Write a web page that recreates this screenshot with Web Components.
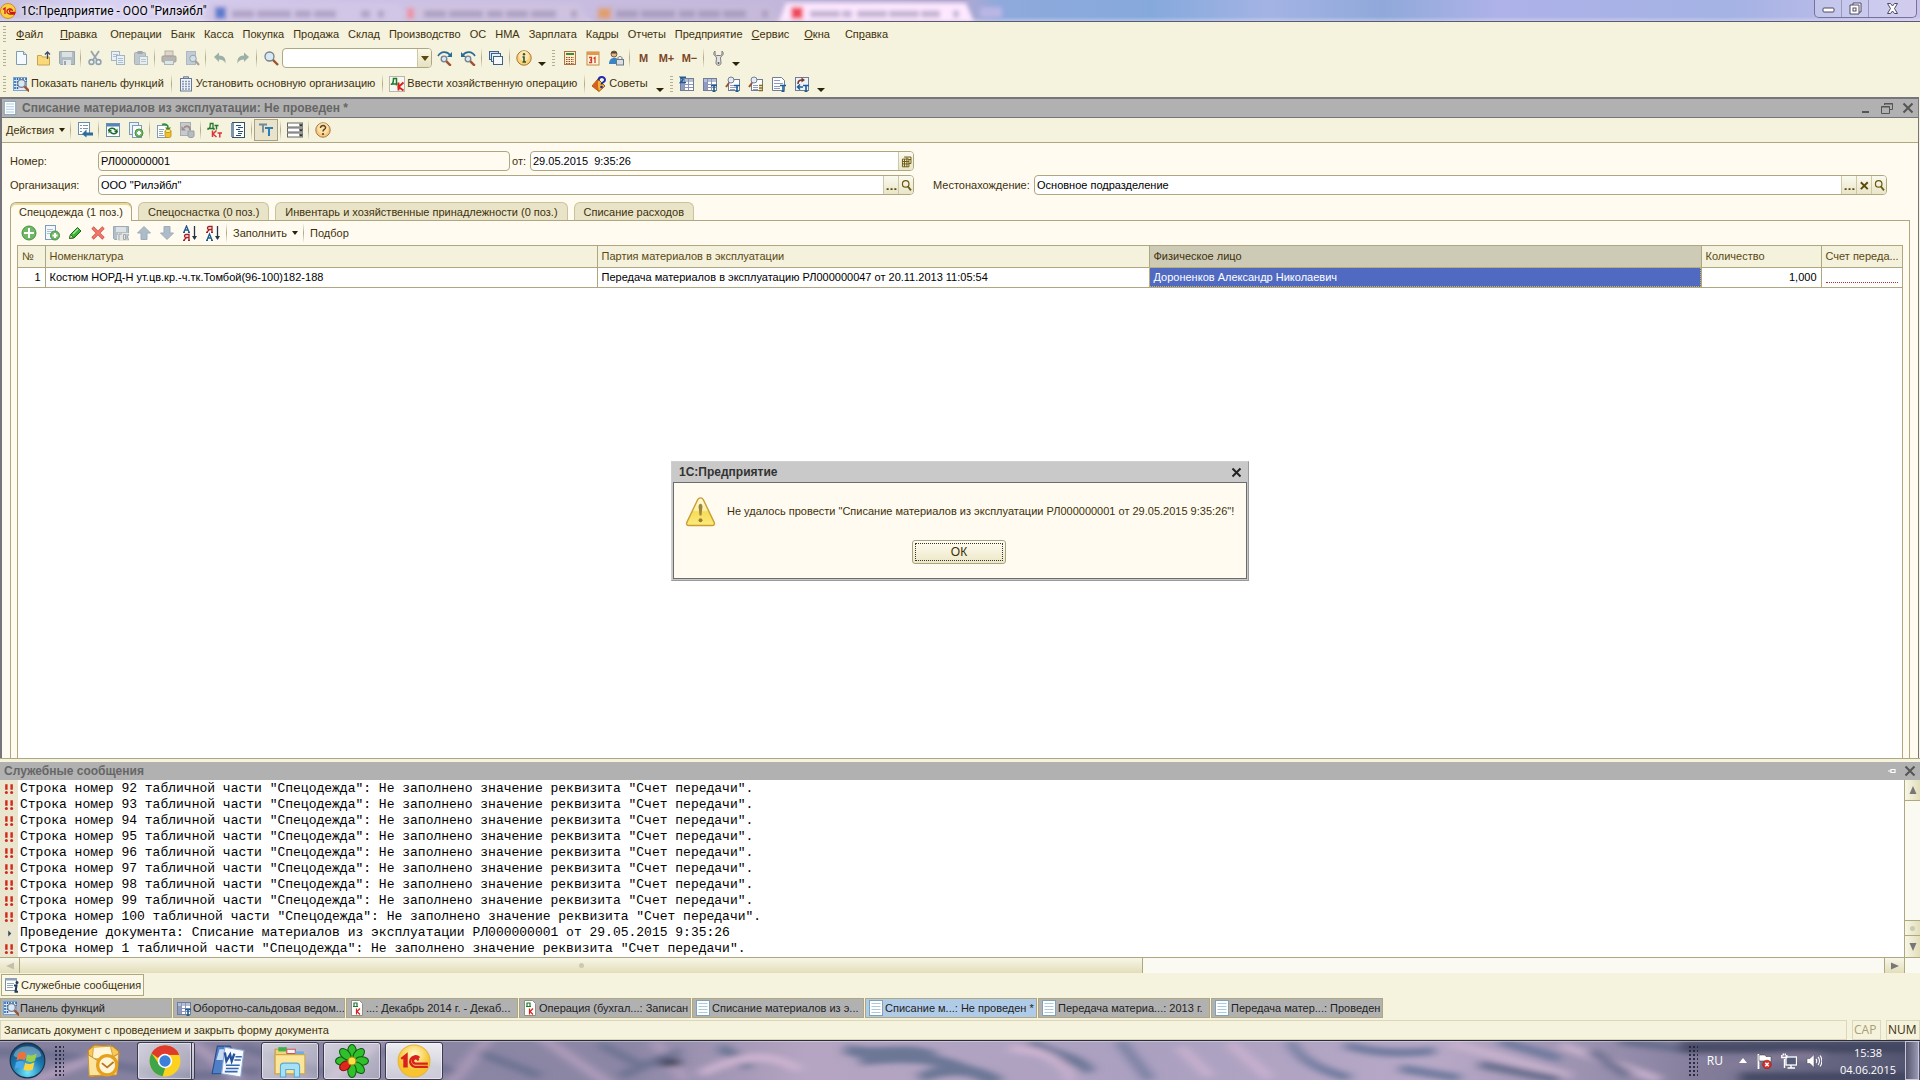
<!DOCTYPE html>
<html lang="ru">
<head>
<meta charset="utf-8">
<title>1С:Предприятие - ООО "Рилэйбл"</title>
<style>
  html, body { margin: 0; height: 100%; overflow: hidden; }
  body {
    --cream: #f5f2dd;
    --form: #fffbf0;
    --line: #aea780;
    --ink: #40310b;
    font: 11px/13px "Liberation Sans", sans-serif;
    color: var(--ink);
  }
</style>
</head>
<body>
<desktop-shell></desktop-shell>
<script>
const BASE = `
  *, *::before, *::after { box-sizing: border-box; }
  button, input, select { font: inherit; color: inherit; margin: 0; padding: 0; border: 0; background: none; border-radius: 0; outline: 0; text-align: inherit; }
  button { cursor: default; white-space: nowrap; }
`;
function define(name, css, html, setup) {
  customElements.define(name, class extends HTMLElement {
    constructor() {
      super();
      this.attachShadow({ mode: 'open' });
    }
    connectedCallback() {
      if (this.shadowRoot.childNodes.length) return;
      const t = document.createElement('template');
      t.innerHTML = `<style>${BASE}${css}</style>` + (typeof html === 'function' ? html(this) : html);
      this.shadowRoot.append(t.content.cloneNode(true));
      if (setup) setup(this);
    }
  });
}

/* ---------- icon set ---------- */
const page = (x, y, w, h) => `<rect x="${x}" y="${y}" width="${w}" height="${h}" fill="#fff" stroke="#6d8bab"/>`;
const tee = `<path d="M9 9.5h6M12 9.5v6M10.5 15.5h3" stroke="#1d5c92" stroke-width="1.6" fill="none"/>`;
const plusBall = (x, y, r) => `<circle cx="${x}" cy="${y}" r="${r}" fill="#6fb865" stroke="#4c8f46"/><path d="M${x - r + 2} ${y}h${2 * r - 4}M${x} ${y - r + 2}v${2 * r - 4}" stroke="#fff" stroke-width="2"/>`;
const lens = (x, y, r) => `<path d="M${x + r * .7} ${y + r * .7}L${x + r + 4} ${y + r + 4}" stroke="#a0522d" stroke-width="2.4"/><circle cx="${x}" cy="${y}" r="${r}" fill="#d8e9f6" stroke="#77808c" stroke-width="1.3"/>`;
const disk = `<g opacity=".8"><path d="M.5 1.5h15v13h-14l-1-1z" fill="#9fb0c0" stroke="#8494a6"/><rect x="3" y="2" width="10" height="5" fill="#d5dde4"/><rect x="4" y="10" width="8" height="5" fill="#dfe5ea"/><rect x="5" y="11" width="2" height="4" fill="#8494a6"/></g>`;
const cyl = `<path d="M9 9v5c0 2.400 6 2.400 6 0V9z" fill="#f0c030" stroke="#b98a10" stroke-width=".8"/><ellipse cx="12" cy="9" rx="3" ry="1.600" fill="#ffe98a" stroke="#b98a10" stroke-width=".8"/>`;
const grid = `<rect x="1.500" y="2.500" width="13" height="12" fill="#fff" stroke="#6f7d96"/><rect x="2" y="3" width="12" height="3" fill="#b6bfd8"/><path d="M5.500 3v11M9.500 3v11M2 8.500h12M2 11.500h12" stroke="#8a94b8"/><rect x="2" y="6" width="3" height="8" fill="#8f9bc2"/>`;
const ICONS = {
  app: `<circle cx="8" cy="8" r="7.500" fill="#fbd043" stroke="#d88a1c"/><path d="M3 6.500l2-1.500v6M12 6.500a3 2.600 0 1 0-2 4.500h5M12.500 8a1.500 1.500 0 1 0-2 1.500h5" fill="none" stroke="#c8161d" stroke-width="1.300"/>`,
  new: `<path d="M3.500 1.500h7l3 3v10h-10z" fill="#f4faff" stroke="#7c9cb9"/><path d="M10.500 1.500v3h3" fill="#cfe0ee" stroke="#7c9cb9"/>`,
  open: `<path d="M1.500 5.500h4l1 1.500h7v8h-12z" fill="#fbd978" stroke="#c9a450"/><path d="M11.500 9V2M9 4.500L11.500 2 14 4.500" stroke="#3d4a66" fill="none" stroke-width="1.300"/>`,
  save: disk,
  cut: `<g opacity=".85"><path d="M4 1l6 9M12 1L6 10" stroke="#8796a5" stroke-width="1.800"/><circle cx="4.500" cy="12" r="2.400" fill="none" stroke="#7b95ae" stroke-width="1.600"/><circle cx="11.500" cy="12" r="2.400" fill="none" stroke="#7b95ae" stroke-width="1.600"/></g>`,
  copy: `<rect x="1.500" y="1.500" width="8" height="9" fill="#eaf0f5" stroke="#a3b5c5"/><rect x="6.500" y="5.500" width="8" height="9" fill="#eaf0f5" stroke="#a3b5c5"/><path d="M3 4.500h5M3 6.500h3M8 8.500h5M8 10.500h5M8 12.500h5" stroke="#a9bfd2"/>`,
  paste: `<g opacity=".85"><rect x="1.500" y="2.500" width="11" height="12" rx="1" fill="#b8c1c8" stroke="#98a4ae"/><rect x="4.500" y="1" width="5" height="3" fill="#8d99a3"/><rect x="6.500" y="6.500" width="8" height="8" fill="#e6edf2" stroke="#a3b5c5"/><path d="M8 9.500h5M8 11.500h5" stroke="#a9bfd2"/></g>`,
  print: `<g opacity=".8"><rect x="4" y="1" width="8" height="5" fill="#d9cfc8" stroke="#ab9f97"/><rect x="1" y="6" width="14" height="6" rx="1" fill="#a9a6a4" stroke="#8f8c8a"/><rect x="3.500" y="10.500" width="9" height="4" fill="#d8e3ec" stroke="#9aa9b6"/></g>`,
  preview: `<g opacity=".85"><rect x="2.500" y="1.500" width="9" height="13" fill="#b9c7d4" stroke="#9fb0c0"/><circle cx="9" cy="8.500" r="3.300" fill="#cbdbe8" stroke="#8894a0"/><path d="M11.500 11l3.500 4" stroke="#a08f82" stroke-width="2"/></g>`,
  undo: `<path d="M2 7l5-4.500v3c5 0 7 3 6.500 8-1.300-3-3-4-6.500-4v2.500z" fill="#9bb0a6"/>`,
  redo: `<path d="M14 7L9 2.500v3c-5 0-7 3-6.500 8 1.300-3 3-4 6.500-4v2.500z" fill="#9bb0a6"/>`,
  find: `${lens(6.5, 6.5, 4.5)}`,
  findnext: `<path d="M1 6c3-5 9-5 12-1" fill="none" stroke="#2a6b96" stroke-width="1.600"/><path d="M15 2v5h-5z" fill="#2a6b96"/>${lens(7, 9, 2.8)}`,
  findprev: `<path d="M15 6c-3-5-9-5-12-1" fill="none" stroke="#2a6b96" stroke-width="1.600"/><path d="M1 2v5h5z" fill="#2a6b96"/>${lens(8, 9, 2.8)}`,
  windows: `<rect x="1.500" y="1.500" width="9" height="8" fill="#cfe0f0" stroke="#3e6287"/><rect x="3.500" y="3.500" width="9" height="8" fill="#e6f0f8" stroke="#3e6287"/><rect x="5.500" y="6.500" width="9" height="8" fill="#f6fafd" stroke="#3e6287"/>`,
  info: `<circle cx="8" cy="8" r="7.200" fill="#fbd27c" stroke="#a8742c"/><circle cx="8" cy="6" r="5" fill="#fde6b0"/><path d="M6.500 7H8v5M6.500 12h3.500" stroke="#2b5a34" stroke-width="1.600" fill="none"/><circle cx="8" cy="4.300" r="1.200" fill="#2b5a34"/>`,
  calc: `<rect x="2.500" y="1.500" width="11" height="13" fill="#fbeec6" stroke="#ab7447"/><rect x="4" y="3" width="8" height="2" fill="#3d8a3c"/><path d="M4 7.500h8M4 9.500h8M4 11.500h8M4 13.500h8" stroke="#a04438" stroke-width="1.200" stroke-dasharray="1.500 1"/>`,
  calendar: `<rect x="2" y="2" width="12" height="13" fill="#fff3d8" stroke="#c08a4a"/><rect x="2" y="2" width="12" height="3" fill="#e2984c"/><path d="M4 7.500h2.500v2.500H5M6.500 10v2.500H4M8.500 8.500l1.500-1V13" stroke="#d43a28" stroke-width="1.300" fill="none"/>`,
  user: `<circle cx="6" cy="4" r="3" fill="#e7b77f" stroke="#5b4a33" stroke-width=".8"/><path d="M3 3.500c0-3 6-3 6 0z" fill="#544330"/><path d="M1 14c0-8 10-8 10-1v1z" fill="#3a84c6"/><rect x="8.500" y="9.500" width="7" height="5.500" fill="#d9dee3" stroke="#6a7886"/><path d="M10 9.500V8c0-2 4-2 4 0v1.500" fill="none" stroke="#6a7886"/>`,
  wrench: `<path d="M5 1c-2 2-1.500 4.500 1 5.500L6.500 8 6 13c0 3 5 3 5 0l-.5-5 .5-1.500c2.500-1 3-3.500 1-5.500v3.500L10.500 5.500h-4L5 4.500z" fill="#e2e2e2" stroke="#7b7b7b"/><circle cx="8.500" cy="13" r="1" fill="#555"/>`,
  panel: `<rect x=".5" y="1.500" width="13" height="13" fill="#e1ebf8" stroke="#7ba3cf"/><path d="M2 2v12M4.500 2v12M7 2v3M10 2v2M13 2v4" stroke="#1c62b4" stroke-width="1.500" stroke-dasharray="2 1"/>${lens(8.5, 7.5, 3.8)}`,
  building: `<path d="M5.500 3V.800h5V3" fill="#cfd9e6" stroke="#6a7a93"/><rect x="2.500" y="2.500" width="11" height="12.500" fill="#eef3fa" stroke="#6a7a93"/><path d="M4 5.500h8M4 8h8M4 10.500h8M4 13h8" stroke="#8797b4" stroke-width="1.300" stroke-dasharray="2 1"/>`,
  dk: `<rect x=".5" y=".5" width="15" height="15" fill="#f7f6f2" stroke="#b7b7ad"/><path d="M2.500 9V7.500M2 8h6.500M7.500 8v1.500M3.500 8c1-2 1-4 1-5.500h3V8" stroke="#1f7a2a" stroke-width="1.500" fill="none"/><path d="M9.500 6.500v8M14.500 6.500l-5 4.500 5 3.500" stroke="#d9201a" stroke-width="1.900" fill="none"/>`,
  advice: `<path d="M1 10l6-7 7 7-6 5.500z" fill="#f2b332" stroke="#a45a10"/><path d="M1 10l6-7v8l1 4.500z" fill="#d8601c"/><path d="M7.500 4.500c0-4.500 6.500-4.500 6.500-.5 0 2.500-3.500 2-3.500 4.500" fill="none" stroke="#1f2ba8" stroke-width="2"/><circle cx="10.500" cy="11" r="1.300" fill="#1f2ba8"/>`,
  sumgrid: `${grid}<path d="M7 1.300H1.500L4 3.800 1.500 6.500H7" fill="none" stroke="#1d5c92" stroke-width="1.500"/>`,
  gridT: grid + tee,
  lensT: `<rect x="3.500" y="3.500" width="11" height="11" fill="#fff" stroke="#6f7d96"/><path d="M5 9.500h8M5 11.500h8M5 13.500h5" stroke="#8f9bc2"/><path d="M4 7l-3 4" stroke="#a0522d" stroke-width="2"/><circle cx="6" cy="4" r="3" fill="#e4eef8" stroke="#77808c"/>${tee}`,
  lensList: `<rect x="3.500" y="3.500" width="11" height="11" fill="#fff" stroke="#6f7d96"/><path d="M5 9.500h5M5 11.500h5M5 13.500h5" stroke="#8f9bc2"/><path d="M4 7l-3 4" stroke="#a0522d" stroke-width="2"/><circle cx="6" cy="4" r="3" fill="#e4eef8" stroke="#77808c"/><path d="M11 9.500h4M11 12h4M11 14.500h4" stroke="#8a6a10" stroke-width="1.500"/>`,
  pageT: `<path d="M1.500 1.500h9l3 3v10h-12z" fill="#fff" stroke="#6f7d96"/><path d="M3 4.500h6M3 7.500h9M3 10.500h6M3 12.500h6" stroke="#8f9bc2"/>${tee}`,
  flowT: `<rect x="1.500" y="1.500" width="13" height="13" fill="#eef2fa" stroke="#6f7d96"/><path d="M4 8c0-3.500 2-4 4-4" stroke="#7a3b24" stroke-width="1.600" fill="none"/><path d="M7.500 1.500v5l3.500-2.500z" fill="#7a3b24"/><path d="M4 11h5M6 8.500L3.500 11 6 13.500" stroke="#1d5c92" stroke-width="1.500" fill="none"/>${tee}`,
  doc: `<rect x="1.500" y=".5" width="13" height="15" fill="#fff" stroke="#7fa2b8"/><path d="M3.500 3.500h9M3.500 6.500h9M3.500 9.500h9M3.500 12.500h9" stroke="#a9cbe0" stroke-width="1.200"/>`,
  savedoc: `${page(1.5, .5, 11, 12)}<path d="M3 3.500h2M6 3.500h5M3 6.500h2M6 6.500h5M3 9.500h2" stroke="#7f93a8"/><path d="M16 12H9" stroke="#2b6d9c" stroke-width="3"/><path d="M9.500 7.500v8L5 12z" fill="#2b6d9c"/>`,
  refresh: `${page(1.5, 1.5, 13, 13)}<rect x="2" y="2" width="12" height="2.500" fill="#5386b8"/><path d="M3.500 9c1-3.500 6-3.500 7-.5M12.500 9c-1 3.500-6 3.500-7 .5" stroke="#1c6e2c" stroke-width="1.500" fill="none"/><path d="M12.500 6.500v3.500H9zM3.500 11.500V8H7z" fill="#1c6e2c"/>`,
  copyadd: `<rect x="1.500" y=".5" width="9" height="12" fill="#eaf1f7" stroke="#7c9cb9"/><rect x="4.500" y="3.500" width="9" height="12" fill="#f6fafd" stroke="#7c9cb9"/>${plusBall(11, 11, 4)}`,
  post: `<rect x="1.500" y="3.500" width="10" height="12" fill="#fff" stroke="#7c9cb9"/><path d="M3 7.500h5M3 9.500h4M3 11.500h4M3 13.500h5" stroke="#8fa8be"/><path d="M6 2.500c3-1 6 0 6 3" stroke="#2f8f2f" stroke-width="1.800" fill="none"/><path d="M9 5.500h6L12 9z" fill="#2f8f2f"/>${cyl}`,
  unpost: `<rect x="1.500" y=".5" width="10" height="13" fill="#c6cbd0" stroke="#a6adb4"/><path d="M5 6c2-3 6-2 6 2" stroke="#a58c88" stroke-width="1.800" fill="none"/><path d="M2.500 4v4.500H7z" fill="#a58c88"/><path d="M9 9v5c0 2 6 2 6 0V9z" fill="#b9bcbf" stroke="#989da2"/>`,
  dtkt: `<path d="M1 8V6.500h6V8M2.500 6.500c.800-1.500.800-3.500.800-5H6v5" stroke="#1f7a2a" stroke-width="1.300" fill="none"/><path d="M7.500 3.500h4M9.500 3.500v4" stroke="#1f7a2a" stroke-width="1.400"/><path d="M5.500 8.500v6.500M9.500 8.500L6 12l3.500 3" stroke="#d9363a" stroke-width="1.500" fill="none"/><path d="M10.500 11h4.500M12.800 11v4.500" stroke="#d9363a" stroke-width="1.500"/>`,
  list: `<rect x="2.500" y=".5" width="12" height="15" fill="#fff" stroke="#35506b"/><rect x="1" y="1" width="3" height="14" fill="#7b95ae"/><path d="M6 3.500h5M8 5.500h5M6 7.500h4M8 9.500h5M8 11.500h4M6 13.500h5" stroke="#24527c"/>`,
  tt: `<path d="M1 2.500h8M5 2.500v8" stroke="#6f8796" stroke-width="1.800"/><path d="M7 6h8M11 6v8" stroke="#2a7fb8" stroke-width="2"/>`,
  rows: `<rect x=".5" y="1" width="15" height="4" fill="#fff" stroke="#666"/><rect x=".5" y="6" width="15" height="4" fill="#fff" stroke="#666"/><rect x=".5" y="11" width="15" height="4" fill="#fff" stroke="#666"/><path d="M12 1h3.500v14H12z" fill="#999"/><path d="M12.500 2.500h3l-1.500 2zM12.500 7.500h3l-1.500 2zM12.500 12.500h3l-1.500 2z" fill="#111"/>`,
  help: `<circle cx="8" cy="8" r="7.200" fill="#fbc778" stroke="#a07a4a"/><circle cx="8" cy="6.500" r="5.500" fill="#fddfa9"/><path d="M5.500 6c0-3.500 5.500-3 5 0-.3 1.600-2.500 1.500-2.500 3.500" fill="none" stroke="#5b4322" stroke-width="1.500"/><circle cx="8" cy="12" r="1.100" fill="#5b4322"/>`,
  add: plusBall(8, 8, 7),
  addcopy: `<rect x="1.500" y=".5" width="10" height="14" fill="#f3f8fc" stroke="#7c9cb9"/><path d="M3 4.500h6M3 6.500h6M3 8.500h4" stroke="#a9bfd2"/>${plusBall(11, 10.5, 4.5)}`,
  edit: `<path d="M2.500 13.500l1-4 7-7 3.500 3.500-7 7z" fill="#39b232" stroke="#1d6b1a"/><path d="M2.500 13.500l1-4 3 3z" fill="#f7d9a8" stroke="#1d6b1a" stroke-width=".8"/><path d="M6 9l5-5" stroke="#a4e89c" stroke-width="1.400"/>`,
  del: `<path d="M2.500 2.500l11 11M13.500 2.500l-11 11" stroke="#d2554a" stroke-width="3.200"/><path d="M3 3l10 10M13 3L3 13" stroke="#f0796c" stroke-width="1.800"/>`,
  saveok: `${disk}<rect x="5" y="8" width="11" height="8" fill="#e8e6d8"/><path d="M6 9v6M6 9h3M11 9.500h1.500v5H10.500v-5zM14 9v6M16 9l-2 3 2 3" stroke="#9aa8b5" fill="none"/>`,
  up: `<path d="M8 1.500L14.500 8H11v6.500H5V8H1.500z" fill="#aebcca" stroke="#9dacba"/>`,
  down: `<path d="M8 14.500L14.500 8H11V1.500H5V8H1.500z" fill="#aebcca" stroke="#9dacba"/>`,
  sortaz: `<path d="M2 7l2.500-6L7 7M3 5h3M1 7.300h2M6 7.300h2" stroke="#1d5c92" stroke-width="1.300" fill="none"/><path d="M7 15V9.500H4c-2 0-2 3 0 3h3M4.500 12.500L2 15M1 15.300h2M6 15.300h2" stroke="#a81f2a" stroke-width="1.300" fill="none"/><path d="M12.500 1v13" stroke="#26364a" stroke-width="1.300"/><path d="M10 11h5l-2.500 4z" fill="#26364a"/>`,
  sortza: `<path d="M7 7V1.500H4c-2 0-2 3 0 3h3M4.500 4.500L2 7M1 7.300h2M6 7.300h2" stroke="#a81f2a" stroke-width="1.300" fill="none"/><path d="M2 15l2.500-6L7 15M3 13h3M1 15.300h2M6 15.300h2" stroke="#1d5c92" stroke-width="1.300" fill="none"/><path d="M12.500 1v13" stroke="#26364a" stroke-width="1.300"/><path d="M10 11h5l-2.500 4z" fill="#26364a"/>`,
  pick: `<path d="M5 2.500h8.500v8M3 5h8M3 5v9.500h8V5M3 8h8M3 11h8M5.500 5v9.500M8.500 3v11.500M13.500 5.500h-3M13.500 10.500H11" stroke="#6b5710" stroke-width="1.200" fill="none"/>`,
  search: `<circle cx="7" cy="6" r="4" fill="none" stroke="#6b5710" stroke-width="1.500"/><path d="M9.500 9l4 5" stroke="#6b5710" stroke-width="2.200"/>`,
  clear: `<path d="M3.500 4l8.500 8.500M12 4l-8.500 8.500" stroke="#5b4a0c" stroke-width="2.300"/>`,
  dots: `<path d="M2 12.500h2.500M6.800 12.500h2.500M11.500 12.500H14" stroke="#5b4a0c" stroke-width="2"/>`,
  msg: `<rect x="1.500" y="1.500" width="11" height="12" fill="#fff" stroke="#7c8fa4"/><rect x="1" y="1" width="12" height="2.500" fill="#8fa2b5"/><path d="M3 6.500h7M3 8.500h6M3 10.500h6" stroke="#8fa8be"/><path d="M10 8.500h2.500l-1 6M10.500 14.800h3.500" stroke="#23395a" stroke-width="2" fill="none"/><circle cx="13" cy="5.500" r="1.500" fill="#23395a"/>`,
  dkpage: `<path d="M2.500 .5h8l3 3v12h-11z" fill="#fff" stroke="#8f8f86"/><path d="M4 6.500h5M5 6V3h3v3" stroke="#1f7a2a" fill="none" stroke-width="1.200"/><path d="M7.500 8.500v6M11 8.500l-3 3 3 3" stroke="#d9201a" stroke-width="1.200" fill="none"/>`,
  bang: `<path d="M4.500 1.500v7.500M11.500 1.500v7.500" stroke="#cf2a1c" stroke-width="3.200"/><circle cx="4.500" cy="12.500" r="2" fill="#cf2a1c"/><circle cx="11.500" cy="12.500" r="2" fill="#cf2a1c"/>`,
  bullet: `<path d="M7 4.500L11 8.500 7 12.500z" fill="#2e4a63"/>`,
  flag: `<path d="M2.500 1v15" stroke="#fff" stroke-width="1.800"/><path d="M3 2h6l1 1.500h5V9h-5L9 8H3z" fill="#fff" stroke="#333" stroke-width=".5"/><circle cx="11" cy="11.500" r="4.300" fill="#d9312b" stroke="#8c1512" stroke-width=".6"/><path d="M9.300 9.800l3.400 3.400M12.700 9.800l-3.400 3.400" stroke="#fff" stroke-width="1.500"/>`,
  net: `<rect x="5" y="4" width="10.500" height="8" fill="#555c78" stroke="#fff" stroke-width="1.300"/><path d="M10 12v2.500M6.500 15h7.500M3.500 6v9M.800 2v2.500h5V2M2.300 .5v2M4.300 .5v2" stroke="#fff" stroke-width="1.400" fill="none"/>`,
  sound: `<path d="M1 5.500h3l4-4v13l-4-4H1z" fill="#fff" stroke="#444" stroke-width=".5"/><path d="M10 6c1 1 1 3 0 4M12 4c2 2 2 6 0 8M14 2.500c2.500 3 2.500 8 0 11" stroke="#fff" stroke-width="1.100" fill="none"/>`,
};
const BIG = {
  warn: `<defs><linearGradient id="w" x2="0" y2="1"><stop offset="0" stop-color="#fffbe0"/><stop offset=".45" stop-color="#fbf0a0"/><stop offset=".5" stop-color="#f5dd58"/><stop offset="1" stop-color="#fbeb7c"/></linearGradient></defs><path d="M16 2c1.500 0 2.500 1 3 2l11 23c1 2 0 3.500-2 3.500H4c-2 0-3-1.500-2-3.500L13 4c.5-1 1.500-2 3-2z" fill="url(#w)" stroke="#c99c34" stroke-width="1.400"/><path d="M14 11c0-4 4-4 4 0l-1 9h-2z" fill="#9b8340"/><circle cx="16" cy="25" r="2" fill="#9b7b30"/>`,
  orb: `<defs><radialGradient id="o" cy=".85" r=".9"><stop offset="0" stop-color="#6fe6ff"/><stop offset=".5" stop-color="#1c78ae"/><stop offset="1" stop-color="#123a60"/></radialGradient></defs><circle cx="16" cy="16" r="15" fill="url(#o)" stroke="#16334d"/><path d="M4 12C6 1 26 1 28 12c-6 3-18 3-24 0z" fill="#b9dcf0" opacity=".45"/><path d="M8 10c3-2 5-1.500 7 0l-1.500 6c-2-1.500-4-1.500-7 0z" fill="#f0703a"/><path d="M16 10.500c2 1.500 5 1.500 8-.5l-1.500 6c-3 2-5.500 1.500-8 0z" fill="#9bd04a"/><path d="M6 17.500c3-1.500 5-1.500 7 0l-1.500 6c-2-1.500-4-1.500-6.500 0z" fill="#4aa8ec"/><path d="M14 18c2 1.500 5 1.500 8-.5l-1.500 6.500c-3 1.500-5.500 1-8 0z" fill="#fcd440"/>`,
  outlook: `<path d="M1 6L7 1l17 1 6 5-3 22-24 2z" fill="#f7c85a" stroke="#c18420"/><path d="M6 3l16-1 3 12H5z" fill="#fff6d8" stroke="#d9a648"/><path d="M1 10l13 8 16-9-2 20-26 1z" fill="#fbe3a0" stroke="#c99434"/><circle cx="19" cy="20" r="9" fill="#fff4d8" stroke="#e5a01c" stroke-width="3"/><path d="M14 18l5 4 6-5" fill="none" stroke="#b07a20" stroke-width="1.800"/>`,
  chrome: `<circle cx="16" cy="16" r="14.500" fill="#fcd221"/><path d="M16 16L3.400 8.800A14.500 14.500 0 0 1 29.200 10H16z" fill="#df3b2d"/><path d="M16 1.500A14.500 14.500 0 0 1 29.200 10H16L9 13 3.400 8.800A14.500 14.500 0 0 1 16 1.500z" fill="#df3b2d"/><path d="M3.400 8.800L10.500 19l6 2.500-2.700 8.900A14.500 14.500 0 0 1 3.400 8.800z" fill="#3fa548"/><circle cx="16" cy="16" r="6.800" fill="#fff"/><circle cx="16" cy="16" r="5.300" fill="#3b7fd8"/>`,
  word: `<path d="M6 2h12l3 5-2 21H1z" fill="#4f7fc4" stroke="#274c8c"/><path d="M8 5h7l-2 10H5z" fill="#c6daf4"/><path d="M13 3l18 3-3 25-18-3z" fill="#f6f9fe" stroke="#8ea8cf"/><path d="M13 8l1.500 8L18 10l1.500 6L22 9" fill="none" stroke="#23519c" stroke-width="2.200"/><path d="M23 12h6M22 15h6M14 20h13M14 23h12M13 26h12" stroke="#3566ae" stroke-width="1.500"/>`,
  folder: `<path d="M2 5h10l2 3h14v20H2z" fill="#f3d377" stroke="#c29a3a"/><path d="M5 3h8v4H5z" fill="#3fae4c"/><path d="M13 5h8v4h-8z" fill="#f4f4f4" stroke="#c55"/><path d="M21 7h8v4h-8z" fill="#6aaee8"/><path d="M2 10h28v18H2z" fill="#fbe59a" stroke="#cfa849"/><path d="M7 31V21c0-2 1-3 3-3h12c2 0 3 1 3 3v10h-5v-7h-8v7z" fill="#a6e0f6" stroke="#5aa9cf"/>`,
  flower: `<g fill="#2fc02c" stroke="#0c5c10" stroke-width="1"><ellipse cx="16" cy="7" rx="4" ry="6.500"/><ellipse cx="16" cy="7" rx="4" ry="6.500" transform="rotate(45 16 16)"/><ellipse cx="16" cy="7" rx="4" ry="6.500" transform="rotate(90 16 16)"/><ellipse cx="16" cy="7" rx="4" ry="6.500" transform="rotate(135 16 16)"/><ellipse cx="16" cy="7" rx="4" ry="6.500" transform="rotate(180 16 16)"/><ellipse cx="16" cy="7" rx="4" ry="6.500" transform="rotate(270 16 16)"/><ellipse cx="16" cy="7" rx="4" ry="6.500" transform="rotate(315 16 16)"/></g><ellipse cx="16" cy="8" rx="4" ry="5.500" fill="#e0261d" stroke="#801010" transform="rotate(235 16 16)"/><circle cx="16" cy="16" r="3.800" fill="#fbe04a" stroke="#a78a10"/>`,
  onec: `<defs><radialGradient id="c" cy=".3"><stop offset="0" stop-color="#fffbd0"/><stop offset="1" stop-color="#f8c32c"/></radialGradient></defs><circle cx="16" cy="16" r="15" fill="url(#c)" stroke="#e5b63c"/><path d="M4 14l5-4v12M7 12v10M21 13a5 5 0 1 0-4 8.500h12M20 15.500a2.500 2.500 0 1 0-2.500 3H29" fill="none" stroke="#d8201c" stroke-width="2.200"/>`,
};
define('ui-icon', `
  :host { display: block; flex: none; width: var(--icon, 16px); height: var(--icon, 16px); }
  svg { display: block; width: 100%; height: 100%; }
`, el => {
  const n = el.getAttribute('name');
  return BIG[n] ? `<svg viewBox="0 0 32 32" aria-hidden="true">${BIG[n]}</svg>` : `<svg viewBox="0 0 16 16" aria-hidden="true">${ICONS[n]}</svg>`;
});

/* ---------- title bar ---------- */
define('app-titlebar', `
  :host { display: flex; align-items: center; height: 22px; flex: none; border-bottom: 1px solid #5d5a70; position: relative; overflow: hidden;
    background: linear-gradient(180deg, #ffffff00 80%, #ffffff50), linear-gradient(90deg, #c6c0e0, #d9d2f2 5%, #cfc4e8 16%, #c3b8dc 40%, #b4a8d0 50%, #8fa9dc 52%, #86a9dc 60%, #a3b3e4 66%, #90a9da 72%, #aeb2e8 78%, #a4b2e4 90%, #c9c2ec); }
  .ghosts { position: absolute; inset: 0; }
  .ghosts svg { display: block; width: 1100px; height: 21px; }
  .caption { position: relative; display: flex; align-items: center; gap: 5px; flex: 1; font: 12px/16px Roboto, sans-serif; color: #000; text-shadow: 0 0 6px #fff, 0 0 6px #fff; }
  .buttons { position: relative; display: flex; align-self: flex-start; height: 18px; margin-right: 3px; border: 1px solid #77729a; border-top: 0; border-radius: 0 0 5px 5px; background: #ffffff30; overflow: hidden; }
  .buttons button { width: 27px; border-right: 1px solid #9c97bd; display: grid; place-items: center; }
  .buttons button:last-child { width: 47px; border: 0; }
  svg.g { width: 13px; height: 13px; }
`, `
  <div class="ghosts"><svg viewBox="0 0 1100 21" aria-hidden="true"><defs><filter id="b"><feGaussianBlur stdDeviation="2"/></filter></defs>
    <g filter="url(#b)"><path d="M206 4h192l12 18H206z" fill="#d2c6e6"/><path d="M400 22l8-18h170l12 18z" fill="#cfc2e0"/><path d="M590 22l8-18h170l12 18z" fill="#c6b9d9"/><path d="M779 22l7-19h180l8 19z" fill="#fde8ff"/>
    <rect x="215" y="7" width="11" height="12" fill="#5d7bce"/><rect x="407" y="8" width="7" height="11" fill="#ec93a6"/><rect x="598" y="8" width="13" height="11" fill="#e0a06e"/><rect x="791" y="7" width="12" height="12" fill="#f14a5c"/>
    <g stroke="#8d82a8" stroke-width="7" opacity=".5" fill="none"><path d="M232 14h106M424 14h132M616 14h130" stroke-dasharray="22 3 34 4 16 3"/><path d="M810 14h42M857 14h83" stroke-dasharray="30 2"/><path d="M361 14h9M378 14h6M571 14h6M762 14h6M953 14h6"/></g>
    <rect x="980" y="7" width="22" height="11" fill="#b9b6e4"/></g></svg></div>
  <div class="caption"><ui-icon name="app"></ui-icon><span>1С:Предприятие - ООО "Рилэйбл"</span></div>
  <div class="buttons">
    <button aria-label="Свернуть"><svg class="g" viewBox="0 0 13 13"><rect x="1" y="6" width="11" height="4" rx="1" fill="#fff" stroke="#4d4a60"/></svg></button>
    <button aria-label="Восстановить"><svg class="g" viewBox="0 0 13 13"><path d="M4 1h8v9h-2v2H1V3h3z" fill="#fff" stroke="#4d4a60"/><path d="M10 10V3H4" fill="none" stroke="#4d4a60"/><rect x="4" y="6" width="3" height="3" fill="none" stroke="#4d4a60"/></svg></button>
    <button aria-label="Закрыть"><svg class="g" viewBox="0 0 13 13"><path d="M1.500 1.500h3l2 2.500 2-2.500h3L8.500 6.500l3 5h-3l-2-2.500-2 2.500h-3l3-5z" fill="#fff" stroke="#4d4a60"/></svg></button>
  </div>
`);

/* ---------- menu bar ---------- */
const GRIP = `.grip { width: 3px; height: 16px; flex: none; background: repeating-linear-gradient(180deg, #b8ae8c 0 1px, transparent 1px 3px); }`;
define('app-menubar', `
  :host { display: flex; align-items: center; height: 24px; padding-left: 3px; }
  ${GRIP}
  nav { display: flex; gap: 9px; padding-left: 6px; }
  .m { padding: 0 4px; }
  .k { padding: 0 6px 0 0; }
`, `<span class="grip"></span><nav></nav>`, el => {
  const items = ['_Файл', '_Правка', 'Операции', 'Банк', 'Касса', 'Покупка', 'Продажа', 'Склад', 'Производство', 'ОС', 'НМА', 'Зарплата', 'Кадры', 'Отчеты', 'Предприятие', '_Сервис', '_Окна', 'Сп_равка'];
  el.shadowRoot.querySelector('nav').innerHTML = items.map((t, i) => `<button class="${t.includes('_') ? (i < 2 ? 'm' : 'k') : ''}">${t.replace(/_(.)/, '<u>$1</u>')}</button>`).join('');
});

/* ---------- tool bar pieces ---------- */
define('tool-button', `
  :host { display: block; flex: none; }
  button { display: flex; align-items: center; justify-content: center; gap: 3px; height: 22px; min-width: 23px; padding: 0 3px; font-weight: inherit; }
  :host([text]) button { padding: 0 5px 0 4px; gap: 2px; }
  :host([menu]) button { padding: 0 3px 0 4px; }
  :host([on]) button { background: #e9e3cb; border: 1px solid #aaa184; }
  :host([bold]) button { font-weight: bold; color: #7b4626; padding: 0; }
  .arrow { border: 3px solid transparent; border-top: 4px solid #2c2206; border-bottom: 0; margin-left: 3px; }
`, el => {
  const i = el.getAttribute('icon'), t = el.getAttribute('text') || el.getAttribute('bold') || '';
  return `<button aria-label="${t || el.getAttribute('hint') || i}">${i ? `<ui-icon name="${i}"></ui-icon>` : ''}${t ? `<span>${t}</span>` : ''}${el.hasAttribute('menu') ? '<span class="arrow"></span>' : ''}</button>`;
});
define('tool-sep', `:host { display: block; width: 1px; height: 20px; margin: 0 2px; flex: none; background: linear-gradient(180deg, transparent, #b0a886, transparent); }`, '');
define('tool-more', `:host { display: flex; align-items: flex-end; width: 14px; height: 16px; flex: none; justify-content: center; } i { border: 4px solid transparent; border-top: 4px solid #2c2206; border-bottom: 0; }`, '<i></i>');
define('tool-grip', `:host { display: block; margin: 0 3px; flex: none; } ${GRIP}`, '<div class="grip"></div>');
define('tool-bar', `:host { display: flex; align-items: center; height: var(--h, 26px); flex: none; }`, '<slot></slot>');
define('tool-combo', `
  :host { display: block; flex: none; position: relative; margin-right: 1px; }
  select { appearance: none; display: block; width: 150px; height: 20px; background: #fff; border: 1px solid var(--line); border-radius: 4px; padding: 0 18px 0 4px; }
  span { position: absolute; right: 1px; top: 1px; width: 14px; height: 18px; display: grid; place-items: center; border-left: 1px solid #cfc8a4; background: linear-gradient(#faf8ea, #e6e1c0); border-radius: 0 3px 3px 0; pointer-events: none; }
  i { border: 4px solid transparent; border-top: 5px solid #5b4a0c; border-bottom: 0; }
`, '<select aria-label="Поиск"><option></option></select><span><i></i></span>');

/* ---------- form field ---------- */
define('form-field', `
  :host { display: flex; align-items: center; min-width: 0; height: 20px; }
  label { flex: none; width: var(--label, auto); }
  .box { flex: 1; min-width: 0; display: flex; align-items: stretch; height: 20px; background: #fff; border: 1px solid var(--line); border-radius: 4px; overflow: hidden; }
  :host([readonly]) .box { background: var(--form); }
  input { flex: 1; min-width: 0; padding: 0 2px; color: #000; }
  button { width: 15px; display: grid; place-items: center; border-left: 1px solid #cfc8a4; background: linear-gradient(#fbfaef, #e9e5c8); --icon: 13px; }
`, el => {
  const b = (el.getAttribute('tools') || '').split(' ').filter(Boolean);
  const names = { dots: 'Выбрать', search: 'Открыть', clear: 'Очистить', pick: 'Календарь' };
  return `<label for="f">${el.getAttribute('label')}</label><div class="box"><input id="f" value='${el.getAttribute('value')}'${el.hasAttribute('readonly') ? ' readonly' : ''}>${b.map(n => `<button aria-label="${names[n]}"><ui-icon name="${n}"></ui-icon></button>`).join('')}</div>`;
});

/* ---------- tabs ---------- */
define('tab-strip', `
  :host { display: flex; gap: 6px; height: 19px; align-items: stretch; margin-bottom: -1px; position: relative; }
  button { height: 18px; padding: 0 9px; background: #e9e4c8; border: 1px solid #c9c29c; border-bottom: 0; border-radius: 6px 6px 0 0; line-height: 16px; }
  button[aria-selected="true"] { height: 19px; padding: 0 8px; background: var(--form); border-color: var(--line); box-shadow: inset 0 2px #ecd994; }
`, el => el.getAttribute('tabs').split('|').map((t, i) => `<button role="tab" aria-selected="${i === 0}">${t}</button>`).join(''));

/* ---------- grid ---------- */
define('data-grid', `
  :host { display: block; flex: 1; min-height: 0; overflow: hidden; background: #fff; border: 1px solid var(--line); border-bottom: 0; }
  table { width: 100%; table-layout: fixed; border-collapse: collapse; }
  th, td { border-right: 1px solid var(--line); border-bottom: 1px solid var(--line); padding: 0 4px; text-align: left; font-weight: normal; white-space: nowrap; overflow: hidden; }
  th:last-child, td:last-child { border-right: 0; }
  th { height: 21px; background: #f4f1dc; color: #5b4910; }
  td { height: 20px; color: #000; }
  th.cur { background: #cdcab6; color: #40310b; }
  td.cur { background: #506ac2; color: #fff; outline: 1px dotted #c9b36a; outline-offset: -1px; }
  .n { text-align: right; }
  .need { display: block; height: 12px; border-bottom: 1px dotted #b03030; }
`, `<table><colgroup><col style="width:27px"><col><col><col><col style="width:120px"><col style="width:81px"></colgroup>
  <thead><tr><th>№</th><th>Номенклатура</th><th>Партия материалов в эксплуатации</th><th class="cur">Физическое лицо</th><th>Количество</th><th>Счет переда...</th></tr></thead>
  <tbody><tr><td class="n">1</td><td>Костюм НОРД-Н ут.цв.кр.-ч.тк.Томбой(96-100)182-188</td><td>Передача материалов в эксплуатацию РЛ000000047 от 20.11.2013 11:05:54</td><td class="cur">Дороненков Александр Николаевич</td><td class="n">1,000</td><td><span class="need"></span></td></tr></tbody></table>`);

/* ---------- document window ---------- */
define('doc-window', `
  :host { display: flex; flex-direction: column; flex: 1; min-height: 0; margin-right: 1px; border: solid #77757c; border-width: 2px 1px 0 2px; background: var(--form); }
  header { display: flex; align-items: center; gap: 5px; height: 18px; padding: 0 4px 0 1px; background: #b1b1b1; border-bottom: 1px solid #77757c; color: #666; font-weight: bold; font-size: 12px; flex: none; --icon: 14px; box-sizing: content-box; }
  h1 { flex: 1; margin: 0; font: inherit; }
  header button svg { display: block; width: 12px; height: 12px; }
  header .b { display: flex; gap: 9px; }
  .tools { background: var(--cream); border-bottom: 1px solid var(--line); --h: 24px; flex: none; }
  .form { display: grid; grid-template-columns: 904px 1fr; column-gap: 19px; row-gap: 4px; padding: 8px 31px 7px 8px; --label: 88px; flex: none; }
  .pair { display: flex; gap: 2px; }
  .pair form-field:first-child { flex: 0 0 500px; }
  .pair form-field { flex: 1; }
  .row1 { grid-column: 1; } .row2 { grid-column: 1; }
  .pane { flex: 1; min-height: 0; display: flex; flex-direction: column; margin: 0 8px; border: 1px solid var(--line); border-bottom: 0; padding: 0 6px; }
  tab-strip { margin-left: 8px; z-index: 1; }
  .pane tool-bar { --h: 24px; }
`, `
  <header><ui-icon name="doc"></ui-icon><h1>Списание материалов из эксплуатации: Не проведен *</h1><div class="b">
    <button aria-label="Свернуть"><svg viewBox="0 0 12 12"><path d="M2 10h7" stroke="#555" stroke-width="2"/></svg></button>
    <button aria-label="Развернуть"><svg viewBox="0 0 12 12"><path d="M3.500 3V1.500h8v6H9M3 2h9M.5 4.500h8v7h-8zM0 5h9" stroke="#555" fill="none"/></svg></button>
    <button aria-label="Закрыть"><svg viewBox="0 0 12 12"><path d="M1.500 1.500l9 9M10.500 1.500l-9 9" stroke="#555" stroke-width="2"/></svg></button></div></header>
  <div class="tools"><tool-bar>
    <tool-button text="Действия" menu></tool-button><tool-sep></tool-sep>
    <tool-button icon="savedoc"></tool-button><tool-sep></tool-sep>
    <tool-button icon="refresh"></tool-button><tool-button icon="copyadd"></tool-button><tool-sep></tool-sep>
    <tool-button icon="post"></tool-button><tool-button icon="unpost"></tool-button><tool-sep></tool-sep>
    <tool-button icon="dtkt"></tool-button><tool-button icon="list"></tool-button><tool-sep></tool-sep>
    <tool-button icon="tt" on></tool-button><tool-sep></tool-sep>
    <tool-button icon="rows"></tool-button><tool-sep></tool-sep>
    <tool-button icon="help"></tool-button></tool-bar></div>
  <div class="form">
    <div class="pair row1"><form-field label="Номер:" value="РЛ000000001" readonly></form-field><form-field style="--label:18px" label="от:" value="29.05.2015  9:35:26" tools="pick"></form-field></div>
    <form-field class="row2" label="Организация:" value='ООО &quot;Рилэйбл&quot;' tools="dots search"></form-field>
    <form-field style="--label:101px" label="Местонахождение:" value="Основное подразделение" tools="dots clear search"></form-field>
  </div>
  <tab-strip tabs="Спецодежда (1 поз.)|Спецоснастка (0 поз.)|Инвентарь и хозяйственные принадлежности (0 поз.)|Списание расходов"></tab-strip>
  <div class="pane"><tool-bar>
    <tool-button icon="add"></tool-button><tool-button icon="addcopy"></tool-button><tool-button icon="edit"></tool-button><tool-button icon="del"></tool-button><tool-button icon="saveok"></tool-button><tool-button icon="up"></tool-button><tool-button icon="down"></tool-button><tool-button icon="sortaz"></tool-button><tool-button icon="sortza"></tool-button><tool-sep></tool-sep>
    <tool-button text="Заполнить" menu></tool-button><tool-sep></tool-sep><tool-button text="Подбор"></tool-button></tool-bar>
    <data-grid></data-grid></div>
`);

/* ---------- service messages ---------- */
define('message-panel', `
  :host { display: block; flex: none; border-top: 1px solid var(--line); padding-top: 3px; }
  header { display: flex; align-items: center; height: 18px; padding: 0 4px; background: #b1b1b1; color: #666; font-weight: bold; font-size: 12px; gap: 8px; }
  h2 { flex: 1; margin: 0; font: inherit; }
  header svg { display: block; width: 12px; height: 12px; }
  .body { display: grid; grid-template-columns: 1fr 16px; grid-template-rows: auto 16px; background: #fff; }
  ul { margin: 0; padding: 1px 0 0; list-style: none; font: 13px/16px "Liberation Mono", monospace; color: #000; background: linear-gradient(90deg, #e9e5cf 18px, #fff 18px); overflow: hidden; }
  li { display: flex; align-items: center; gap: 5px; height: 16px; padding-left: 3px; white-space: pre; --icon: 12px; }
  .v, .h { display: flex; background: #faf9f2; }
  .v { flex-direction: column; border-left: 1px solid var(--line); }
  .h { border-top: 1px solid var(--line); }
  .corner { border: solid var(--line); border-width: 1px 0 0 1px; background: #faf9f2; }
  .btn { display: grid; place-items: center; flex: none; }
  .v .btn { background: linear-gradient(90deg, #f8f6e8, #e2deba); height: 21px; border-bottom: 1px solid var(--line); }
  .v .thumb { height: 16px; border-top: 1px solid var(--line); }
  .v .btn:last-child { border-bottom: 0; }
  .h .btn { background: linear-gradient(#f8f6e8, #e2deba); width: 20px; border-right: 1px solid var(--line); }
  .h .thumb { flex: 0 0 59%; }
  .h .btn:last-child { border-left: 1px solid var(--line); border-right: 0; }
  .gap { flex: 1; }
  .btn svg { display: block; width: 8px; height: 8px; }
  .dot { width: 5px; height: 5px; border-radius: 3px; background: #cdc9ad; }
`, `
  <header><h2>Служебные сообщения</h2><button aria-label="Закрепить"><svg viewBox="0 0 12 12"><path d="M4 6h3M7 4.500h4v3H7z" stroke="#fff" stroke-width="1.200" fill="none"/></svg></button><button aria-label="Закрыть"><svg viewBox="0 0 12 12"><path d="M1.500 1.500l9 9M10.500 1.500l-9 9" stroke="#555" stroke-width="2"/></svg></button></header>
  <div class="body"><ul></ul>
    <div class="v"><button class="btn" aria-label="Вверх"><svg viewBox="0 0 8 8"><path d="M4 0l3.500 8h-7z" fill="#777"/></svg></button><span class="gap"></span><span class="btn thumb"><i class="dot"></i></span><button class="btn" aria-label="Вниз"><svg viewBox="0 0 8 8"><path d="M4 8L.5 0h7z" fill="#777"/></svg></button></div>
    <div class="h"><button class="btn" aria-label="Влево"><svg viewBox="0 0 8 8"><path d="M0 4l8-3.500v7z" fill="#c3bfaa"/></svg></button><span class="btn thumb"><i class="dot"></i></span><span class="gap"></span><button class="btn" aria-label="Вправо"><svg viewBox="0 0 8 8"><path d="M8 4L0 .5v7z" fill="#777"/></svg></button></div>
    <div class="corner"></div></div>
`, el => {
  const line = n => ['bang', `Строка номер ${n} табличной части "Спецодежда": Не заполнено значение реквизита "Счет передачи".`];
  const rows = [92, 93, 94, 95, 96, 97, 98, 99, 100].map(line);
  rows.push(['bullet', 'Проведение документа: Списание материалов из эксплуатации РЛ000000001 от 29.05.2015 9:35:26'], line(1));
  el.shadowRoot.querySelector('ul').innerHTML = rows.map(([i, t]) => `<li><ui-icon name="${i}"></ui-icon><span>${t}</span></li>`).join('');
});

/* ---------- window switcher and status bar ---------- */
define('window-list', `
  :host { display: block; flex: none; padding-top: 1px; }
  .svc { display: flex; align-items: center; gap: 1px; height: 22px; margin-left: 1px; padding: 0 2px; background: #fbf8e8; border: 1px solid var(--line); }
  .tabs { display: flex; gap: 1px; padding: 2px 0; }
  .tabs button { display: flex; align-items: center; gap: 1px; flex: 0 1 172px; min-width: 0; height: 20px; padding: 0 2px; background: #b1b1b1; border: 1px solid var(--line); color: #222; overflow: hidden; }
  .tabs .cur { background: #b0cbe8; }
`, `<button class="svc"><ui-icon name="msg"></ui-icon>Служебные сообщения</button><div class="tabs"></div>`, el => {
  const w = [['panel', 'Панель функций'], ['gridT', 'Оборотно-сальдовая ведом...'], ['dkpage', '...: Декабрь 2014 г. - Декаб...'], ['dkpage', 'Операция (бухгал...: Записан'], ['doc', 'Списание материалов из э...'], ['doc', 'Списание м...: Не проведен *'], ['doc', 'Передача материа...: 2013 г.'], ['doc', 'Передача матер...: Проведен']];
  el.shadowRoot.querySelector('.tabs').innerHTML = w.map(([i, t], k) => `<button class="${k === 5 ? 'cur' : ''}"><ui-icon name="${i}"></ui-icon><span>${t}</span></button>`).join('');
});
define('status-bar', `
  :host { display: flex; gap: 5px; height: 20px; flex: none; align-items: stretch; }
  span { border: 1px solid #dcd7bb; display: flex; align-items: center; padding: 0 3px; }
  .t { flex: 1; }
  .k { font: 12px/14px "Open Sans", sans-serif; width: 29px; padding: 0 1px; color: #a99f72; }
  .k:last-child { width: 34px; color: #40310b; padding: 0 1px; }
`, '<span class="t">Записать документ с проведением и закрыть форму документа</span><span class="k">CAP</span><span class="k">NUM</span>');

/* ---------- modal message ---------- */
define('message-dialog', `
  :host { position: absolute; inset: 0; display: grid; place-items: center; padding-top: 2px; box-sizing: border-box; }
  section { width: 578px; background: #c9c9c9; border: 1px solid #9a9a9a; border-top-color: #cfcfcf; border-left-color: #cfcfcf; padding: 0 1px 1px; }
  header { display: flex; align-items: center; height: 20px; padding: 0 5px 0 6px; font-weight: bold; font-size: 12px; color: #333; }
  h2 { flex: 1; margin: 0; font: inherit; }
  header svg { display: block; width: 11px; height: 11px; }
  .in { border: 1px solid #6c6c6c; background: var(--form); display: flex; flex-direction: column; align-items: center; gap: 13px; padding: 13px 13px 14px 11px; }
  p { display: flex; align-items: center; gap: 11px; margin: 0; align-self: stretch; white-space: nowrap; --icon: 31px; }
  .ok { width: 94px; height: 24px; border: 1px solid #a9a27e; border-radius: 3px; background: linear-gradient(#fffdf2, #ece7c6); outline: 1px dotted #333; outline-offset: -4px; text-align: center; font-size: 12px; }
`, `<section role="dialog" aria-labelledby="h"><header><h2 id="h">1С:Предприятие</h2><button aria-label="Закрыть"><svg viewBox="0 0 11 11"><path d="M1.500 1.500l8 8M9.500 1.500l-8 8" stroke="#222" stroke-width="2"/></svg></button></header>
  <div class="in"><p><ui-icon name="warn"></ui-icon><span>Не удалось провести "Списание материалов из эксплуатации РЛ000000001 от 29.05.2015 9:35:26"!</span></p><button class="ok">ОК</button></div></section>`);

/* ---------- task bar ---------- */
define('task-bar', `
  :host { display: flex; align-items: stretch; height: 40px; flex: none; border-top: 1px solid #2b2b3a; position: relative; overflow: hidden; background: #8a86a6; color: #fff; font: 12px/17px "Open Sans", sans-serif; }
  .wall { position: absolute; inset: 0; width: 100%; height: 100%; }
  .apps, .tray { position: relative; display: flex; align-items: center; }
  .apps { flex: 1; --icon: 34px; }
  .apps button { width: 58px; height: 38px; display: grid; place-items: center; }
  .apps .start { width: 54px; --icon: 37px; }
  .apps .run { border: 1px solid #3b3a50; border-radius: 3px; background: linear-gradient(135deg, #ffffffa0, #ffffff40); box-shadow: inset 0 0 0 1px #ffffff80; margin-right: 4px; }
  .apps .many { border-right: 4px double #3b3a50; }
  .apps .act { background: linear-gradient(#ffffffd8, #ffffff90); }
  .dots { width: 10px; height: 31px; background: radial-gradient(circle, #23233a 1px, transparent 1px) 0 0 / 4px 4px; opacity: .9; }
  .tray { gap: 9px; padding-right: 1px; }
  .tray .tri { border: 4px solid transparent; border-bottom: 5px solid #fff; border-top: 0; margin-left: 7px; }
  time { display: block; text-align: center; margin-left: 9px; font-size: 11px; }
  .peek { width: 14px; align-self: stretch; border: 1px solid #c9c6dc; background: linear-gradient(90deg, #55566e, #9a98b2); }
`, `
  <svg class="wall" viewBox="0 0 1920 40" preserveAspectRatio="none" aria-hidden="true"><defs><filter id="wb" x="0" y="0" width="1" height="1"><feGaussianBlur stdDeviation="6 3"/></filter>
      <linearGradient id="base"><stop offset="0" stop-color="#85809e"/><stop offset=".33" stop-color="#8d87a6"/><stop offset=".42" stop-color="#b5a5c2"/><stop offset=".6" stop-color="#aba0c0"/><stop offset=".75" stop-color="#b7a8c6"/><stop offset=".86" stop-color="#8f88a6"/><stop offset="1" stop-color="#50536e"/></linearGradient></defs>
    <rect width="1920" height="40" fill="url(#base)"/>
    <g filter="url(#wb)" fill="none" stroke-width="9" opacity=".85">
      <path d="M-20 12C100 5 140 50 260 30M240 5l90 30M380 8l80 26" stroke="#6d7090"/>
      <path d="M30 42l80-30M190 0l50 40M330 40l50-40M540 -5l70 50M450 45l40-50M655 0l30 40" stroke="#b5a1bf"/>
      <path d="M480 12l60 24M600 3l40 22M620 36l60-26" stroke="#6b7190"/><path d="M660 22h20" stroke="#3e4258"/>
      <path d="M720 6l30 20M845 8c30 10 60-4 90 8M860 20c60-8 90 0 130 20M920 38c30-14 60-8 80 4M1030 2c20 14 50 14 60 30" stroke="#61708f" stroke-width="11"/>
      <path d="M1120 0l30 40M1290 0c10 20 30 30 60 38M1345 4c30 8 50 10 90 6M1400 28l60 10M1500 0l60 18" stroke="#69769a"/>
      <path d="M700 34c40-20 70-24 100-4M1010 8c40 0 60 20 60 34M1180 6l30 30M1230 2l40 36" stroke="#cfb5d2"/>
      <path d="M1450 2l120 34M1560 4l100 36" stroke="#c9b3cf"/><path d="M1590 10l40 26M1480 24l80 16M1620 0l80 10" stroke="#646a8a"/>
      <path d="M1680 6h260M1740 38h200" stroke="#40445e" stroke-width="12"/><path d="M1690 40c40-20 80-26 130-24" stroke="#847b98"/>
    </g><rect width="1920" height="1" fill="#fff" opacity=".35"/></svg>
  <div class="apps"><button class="start" aria-label="Пуск"><ui-icon name="orb"></ui-icon></button><span class="dots"></span>
    <button style="margin:0 4px 0 11px" aria-label="Outlook"><ui-icon name="outlook"></ui-icon></button>
    <button class="run many" aria-label="Chrome"><ui-icon name="chrome"></ui-icon></button>
    <button style="margin-right:4px" aria-label="Word"><ui-icon name="word"></ui-icon></button>
    <button class="run" aria-label="Проводник"><ui-icon name="folder"></ui-icon></button>
    <button class="run" aria-label="ICQ"><ui-icon name="flower"></ui-icon></button>
    <button class="run act" aria-label="1С:Предприятие"><ui-icon name="onec"></ui-icon></button></div>
  <div class="tray"><span class="dots"></span><span>RU</span><i class="tri"></i><ui-icon name="flag"></ui-icon><ui-icon name="net"></ui-icon><ui-icon name="sound"></ui-icon><time>15:38<br>04.06.2015</time><span class="peek"></span></div>
`);

/* ---------- shell ---------- */
define('desktop-shell', `
  :host { display: flex; flex-direction: column; height: 100vh; }
  .app { position: relative; flex: 1; min-height: 0; display: flex; flex-direction: column; background: var(--cream); }
`, `
  <div class="app">
    <app-titlebar></app-titlebar>
    <app-menubar></app-menubar>
    <tool-bar style="--h:24px"><tool-grip></tool-grip>
      <tool-button icon="new"></tool-button><tool-button icon="open"></tool-button><tool-button icon="save"></tool-button><tool-sep></tool-sep>
      <tool-button icon="cut"></tool-button><tool-button icon="copy"></tool-button><tool-button icon="paste"></tool-button><tool-sep></tool-sep>
      <tool-button icon="print"></tool-button><tool-button icon="preview"></tool-button><tool-sep></tool-sep>
      <tool-button icon="undo"></tool-button><tool-button icon="redo"></tool-button><tool-sep></tool-sep>
      <tool-button icon="find"></tool-button><tool-combo></tool-combo><tool-button icon="findnext"></tool-button><tool-button icon="findprev"></tool-button><tool-sep></tool-sep>
      <tool-button icon="windows"></tool-button><tool-sep></tool-sep><tool-button icon="info"></tool-button><tool-more></tool-more>
      <tool-grip></tool-grip><tool-button icon="calc"></tool-button><tool-button icon="calendar"></tool-button><tool-button icon="user"></tool-button><tool-sep></tool-sep>
      <tool-button bold="M"></tool-button><tool-button bold="M+"></tool-button><tool-button bold="M−"></tool-button><tool-sep></tool-sep>
      <tool-button icon="wrench"></tool-button><tool-more></tool-more></tool-bar>
    <tool-bar style="--h:27px"><tool-grip></tool-grip>
      <tool-button icon="panel" text="Показать панель функций"></tool-button><tool-sep></tool-sep>
      <tool-button icon="building" text="Установить основную организацию"></tool-button><tool-sep></tool-sep>
      <tool-button icon="dk" text="Ввести хозяйственную операцию"></tool-button><tool-sep></tool-sep>
      <tool-button icon="advice" text="Советы"></tool-button><tool-more></tool-more>
      <tool-grip></tool-grip><tool-button icon="sumgrid"></tool-button><tool-button icon="gridT"></tool-button><tool-button icon="lensT"></tool-button><tool-button icon="lensList"></tool-button><tool-button icon="pageT"></tool-button><tool-button icon="flowT"></tool-button><tool-more></tool-more></tool-bar>
    <doc-window></doc-window>
    <message-panel></message-panel>
    <window-list></window-list>
    <status-bar></status-bar>
    <message-dialog></message-dialog>
  </div>
  <task-bar></task-bar>
`);
</script>
</body>
</html>
